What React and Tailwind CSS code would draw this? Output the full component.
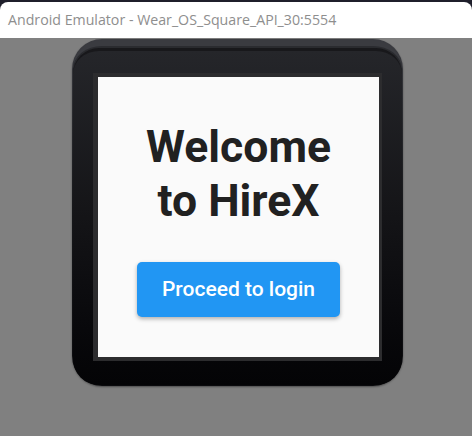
import React from "react";

const Watch = ({ children }) => (
  <div className="ml-[72px] mt-px w-[331px] h-[347px] rounded-[30px] bg-gradient-to-b from-[#3b3c41] via-[#16171a] to-[#0b0b0e] p-px shadow-[0_1px_2px_rgba(0,0,0,0.4)]">
    <div className="w-full h-full rounded-[29px] bg-gradient-to-b from-[#2a2b2f] via-[#161719] to-[#050507] border-t-[6px] border-[#3a3b40] border-x-0 border-b-0 pt-[2px]">
      <div className="w-full h-full rounded-[26px] bg-gradient-to-b from-[#25262a] via-[#141417] to-[#040406] border-t-[3px] border-[#18181b] pt-[22px] px-[20px]">
        <div className="w-[289px] h-[288px] bg-[#2c2c2e] pt-[4px] pl-[5px] pr-[3px] pb-[4px]">
          {children}
        </div>
      </div>
    </div>
  </div>
);

export default function App() {
  return (
    <div className="w-[472px] h-[436px] bg-[#808080] overflow-hidden font-['Roboto',sans-serif]">
      {/* Title bar */}
      <div className="bg-[#1f1f2b] pt-[2px]">
        <div className="h-[36px] bg-white rounded-t-[8px] flex items-center pl-[8px]">
          <span className="text-[14.2px] text-[#8e8e8e] font-['Open_Sans',sans-serif]">
            Android Emulator - Wear_OS_Square_API_30:5554
          </span>
        </div>
      </div>

      <Watch>
        <div className="w-full h-full bg-[#fafafa] flex flex-col items-center pt-[43px]">
          <h1 className="text-[44.5px] leading-[54px] font-bold text-[#212121] text-center">
            Welcome
            <br />
            to HireX
          </h1>
          <button className="mt-[34px] w-[203px] h-[55px] rounded-[5px] bg-[#2196f3] text-white text-[21px] font-medium shadow-[0_2px_4px_rgba(0,0,0,0.3)]">
            Proceed to login
          </button>
        </div>
      </Watch>
    </div>
  );
}
